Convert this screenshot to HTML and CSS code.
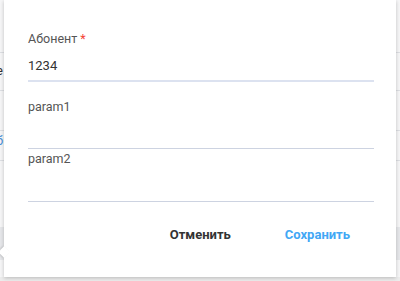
FILE: index.html
```html
<html>
<head>
<meta charset="utf-8">
<link rel="stylesheet" href="styles.css">
</head>
<body>

<div class="backdrop">
  <div class="row row-head"></div>
  <div class="row row-a"><span class="cell-text">е</span></div>
  <div class="row row-b"></div>
  <div class="row row-c"><span class="cell-link">б</span></div>
  <div class="row row-gap"></div>
  <div class="row row-foot"></div>
</div>

<div class="popup">
  <div class="field first">
    <div class="label">Абонент <span class="req">*</span></div>
    <div class="input focused">1234</div>
  </div>
  <div class="field second">
    <div class="label">param1</div>
    <div class="input"></div>
  </div>
  <div class="field third">
    <div class="label">param2</div>
    <div class="input"></div>
  </div>
  <div class="actions">
    <button class="btn cancel">Отменить</button>
    <button class="btn save">Сохранить</button>
  </div>
</div>

</body>
</html>
```

FILE: styles.css
```css
body {
	margin: 0;
	font-family: Roboto, "Liberation Sans", Arial, sans-serif;
	font-size: 12px;
	background-color: #ececec;
	width: 400px;
	height: 281px;
	overflow: hidden;
	position: relative;
}

/* page behind the popup */
.backdrop {
	background-color: #f6f6f7;
	height: 277px;
}
.row {
	border-bottom: 1px solid #dddfe3;
	box-sizing: border-box;
}
.row-head { height: 53px; }
.row-a { height: 38px; line-height: 36px; }
.row-b { height: 40px; }
.row-c { height: 30px; line-height: 20px; }
.row-gap { height: 66px; border-bottom: none; }
.row-foot { height: 33px; background-color: #e6e7ea; border-bottom: none; }

.cell-text {
	display: inline-block;
	margin-left: -4px;
	color: #333;
	font-size: 13px;
}
.cell-link {
	display: inline-block;
	margin-left: -4px;
	color: #4a90d9;
	font-size: 13px;
}

/* popup */
.popup {
	position: absolute;
	left: 4px;
	top: 0;
	width: 392px;
	height: 277px;
	box-sizing: border-box;
	padding: 31px 22px 0 24px;
	background: #fff;
	box-shadow: 0 1px 4px rgba(0,0,0,0.22);
}
.popup:before {
	content: "";
	position: absolute;
	left: -4px;
	top: 248px;
	width: 8px;
	height: 8px;
	background: #fff;
	transform: rotate(45deg);
	box-shadow: -1px 1px 2px rgba(0,0,0,0.15);
}

.label {
	color: #555;
	line-height: 16px;
	font-size: 12.5px;
}
.req {
	color: #f44336;
}
.input {
	height: 33px;
	border-bottom: 1px solid #cdd3e1;
}
.input.focused {
	box-sizing: border-box;
	padding-top: 11px;
	line-height: 16px;
	font-size: 13px;
	color: #333;
	border-bottom: 2px solid #dce2f0;
	height: 35px;
}
.second { margin-top: 17px; }
.third { margin-top: 2px; }
.third .input { height: 34px; }

.actions {
	display: flex;
	justify-content: flex-end;
	margin-top: 25px;
}
.btn {
	border: none;
	background: none;
	font-family: Roboto, "Liberation Sans", Arial, sans-serif;
	font-size: 13px;
	font-weight: bold;
	line-height: 16px;
	padding: 0 24px;
	margin-left: 6px;
}
.cancel { color: #333; }
.save { color: #42a7f5; }
```
